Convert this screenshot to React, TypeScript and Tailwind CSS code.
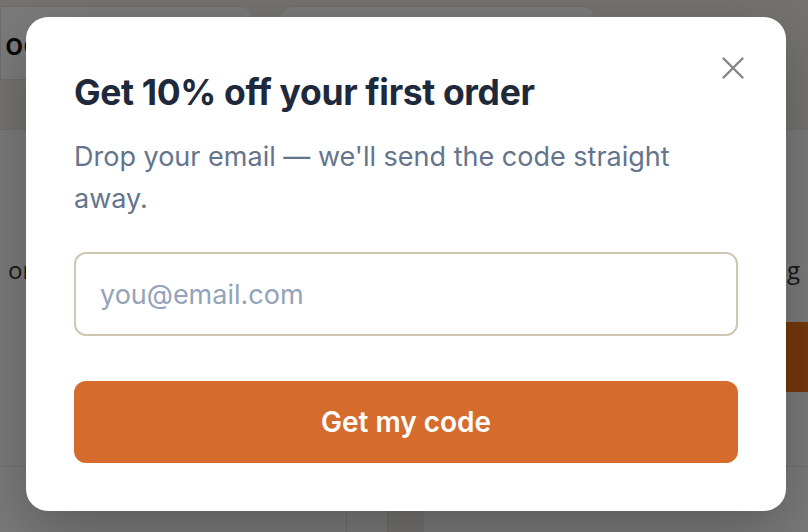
import React, { useState } from "react";

function CloseIcon() {
  return (
    <svg
      width="24"
      height="24"
      viewBox="0 0 24 24"
      fill="none"
      stroke="currentColor"
      strokeWidth="2.4"
      strokeLinecap="round"
    >
      <path d="M2.5 2.5l19 19M21.5 2.5l-19 19" />
    </svg>
  );
}

function PageBehind() {
  return (
    <div className="flex h-full flex-col bg-[#f5f5f5] font-['Open_Sans',sans-serif]">
      {/* header */}
      <div className="flex h-[130px] items-start gap-[27px] border-b border-[#dedede] bg-[#ebe7e1] pt-[6px]">
        <div className="flex h-[74px] w-[253px] items-center rounded-r-[12px] border border-[#dcdcdc] bg-[#f6f6f6] pl-[4px] text-[30px] font-semibold text-[#111]">
          oo
        </div>
        <div className="h-[74px] w-[315px] rounded-[12px] border border-[#dcdcdc] bg-[#f6f6f6]" />
      </div>
      {/* content */}
      <div className="flex h-[337px] border-b border-[#e3e3e3]">
        <div className="flex w-[400px] items-start pl-[8px] pt-[122px] text-[24px] text-[#333]">
          on
        </div>
        <div className="flex flex-1 flex-col items-end pt-[122px]">
          <div className="pr-[8px] text-[24px] text-[#333]">Sending</div>
          <div className="mt-[34px] flex h-[70px] w-[200px] items-center rounded-l-[8px] bg-[#e8701c] pl-[6px] text-[24px] font-bold text-white">
            Sending
          </div>
        </div>
      </div>
      <div className="flex flex-1">
        <div className="w-[347px] border-r border-[#dcdcdc]" />
        <div className="w-[41px] border-r border-[#dcdcdc]" />
        <div className="w-[36px] bg-[#e6e4e0]" />
        <div className="flex-1" />
      </div>
    </div>
  );
}

export default function App() {
  const [email, setEmail] = useState("");

  return (
    <div className="relative h-[532px] w-[808px] overflow-hidden">
      <PageBehind />
      <div className="absolute inset-0 flex items-start bg-black/50 pl-[26px] pt-[17px]">
        <div className="relative w-[760px] rounded-[22px] bg-white px-12 pb-12 pt-[56px] font-['Inter',sans-serif] shadow-[0_20px_60px_rgba(0,0,0,0.25)]">
          <button
            type="button"
            aria-label="Close"
            className="absolute right-[41px] top-[39px] text-[#858585]"
          >
            <CloseIcon />
          </button>
          <h2 className="text-[35.5px] font-bold leading-[40px] tracking-[-0.01em] text-[#1e293b]">
            Get 10% off your first order
          </h2>
          <p className="mt-[23px] max-w-[664px] text-[27px] leading-[42px] text-[#64748b]">
            Drop your email — we'll send the code straight away.
          </p>
          <input
            type="email"
            value={email}
            onChange={(e) => setEmail(e.target.value)}
            placeholder="you@email.com"
            className="mt-[32px] block h-[84px] w-full rounded-[12px] border-2 border-[#cfc7b3] bg-white px-[24px] text-[27px] text-[#1e293b] outline-none placeholder:text-[#94a3b8]"
          />
          <button
            type="button"
            className="mt-[45px] flex h-[82px] w-full items-center justify-center rounded-[12px] bg-[#d56c2e] text-[28px] font-semibold text-white"
          >
            Get my code
          </button>
        </div>
      </div>
    </div>
  );
}
